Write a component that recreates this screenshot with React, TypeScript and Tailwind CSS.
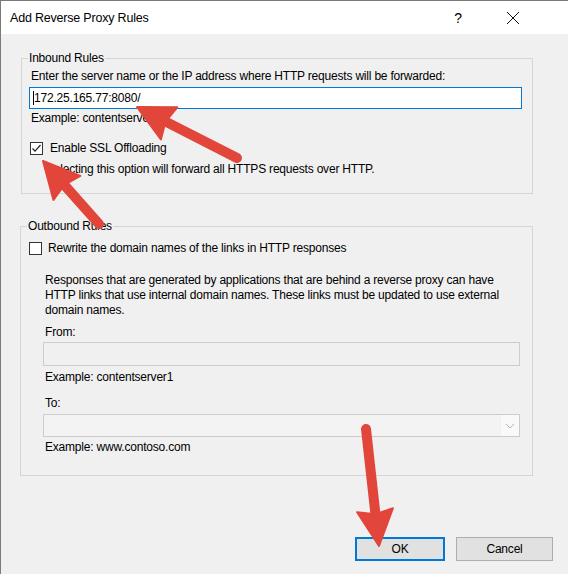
import React from "react";

const font = { fontFamily: '"Liberation Sans", Arial, sans-serif' };

type Pt = [number, number];

// red callout arrow laid over the dialog
function Arrow({ tail, tip, headLen = 36, headHalf = 18, shaft = 10 }: { tail: Pt; tip: Pt; headLen?: number; headHalf?: number; shaft?: number }) {
  const dx = tip[0] - tail[0];
  const dy = tip[1] - tail[1];
  const len = Math.sqrt(dx * dx + dy * dy);
  const ux = dx / len;
  const uy = dy / len;
  const bx = tip[0] - ux * headLen;
  const by = tip[1] - uy * headLen;
  const px = -uy;
  const py = ux;
  const head = [
    tip,
    [bx + px * headHalf, by + py * headHalf],
    [bx + ux * 4, by + uy * 4],
    [bx - px * headHalf, by - py * headHalf],
  ]
    .map((p) => p.join(","))
    .join(" ");
  return (
    <g>
      <line x1={tail[0]} y1={tail[1]} x2={bx + ux * 6} y2={by + uy * 6} stroke="#e2453a" strokeWidth={shaft} strokeLinecap="round" />
      <polygon points={head} fill="#e2453a" stroke="#e2453a" strokeWidth={2} strokeLinejoin="round" />
    </g>
  );
}

function CheckBox({ checked }: { checked?: boolean }) {
  return (
    <div className="w-[13px] h-[13px] border border-[#333333] bg-white flex items-center justify-center shrink-0">
      {checked && (
        <svg width="11" height="11" viewBox="0 0 11 11">
          <path d="M1.5 5.5 L4 8.2 L9.5 2" fill="none" stroke="#222" strokeWidth="1.2" />
        </svg>
      )}
    </div>
  );
}

export default function App() {
  return (
    <div className="relative w-[568px] h-[574px] overflow-hidden bg-[#f0f0f0] border-l border-t border-[#7a7a7a] text-[12px] leading-[16px] tracking-[-0.2px] text-black" style={font}>
      {/* title bar */}
      <div className="h-[33px] bg-white flex items-center pl-[9px]">
        <div className="text-[12.5px]">Add Reverse Proxy Rules</div>
        <div className="ml-auto w-[20px] text-center text-[14px] mr-[38px]">?</div>
        <svg width="14" height="14" viewBox="0 0 14 14" className="mr-[48px]">
          <path d="M1 1 L13 13 M13 1 L1 13" stroke="#111" strokeWidth="1" />
        </svg>
      </div>

      {/* inbound */}
      <fieldset className="mt-[16px] ml-[20px] w-[512px] border border-[#d5d5d5] pb-[16px]">
        <legend className="ml-[6px] px-[1px] leading-[16px]">Inbound Rules</legend>
        <div className="pt-[2px] ml-[9px]">Enter the server name or the IP address where HTTP requests will be forwarded:</div>
        <div className="mt-[3px] ml-[7px] w-[493px] h-[22px] border border-[#0078d7] bg-white flex items-center pl-[3px]">
          <span className="w-px h-[14px] bg-black" />
          <span>172.25.165.77:8080/</span>
        </div>
        <div className="mt-[1px] ml-[9px]">Example: contentserver1</div>
        <div className="mt-[14px] ml-[8px] flex items-center gap-[7px]">
          <CheckBox checked />
          <span>Enable SSL Offloading</span>
        </div>
        <div className="mt-[5px] ml-[24px]">Selecting this option will forward all HTTPS requests over HTTP.</div>
      </fieldset>

      {/* outbound */}
      <fieldset className="mt-[24px] ml-[19px] w-[513px] border border-[#d5d5d5] pb-[20px]">
        <legend className="ml-[6px] px-[1px] leading-[16px]">Outbound Rules</legend>
        <div className="pt-[6px] ml-[8px] flex items-center gap-[6px]">
          <CheckBox />
          <span>Rewrite the domain names of the links in HTTP responses</span>
        </div>
        <div className="mt-[17px] ml-[24px] leading-[15px]">
          Responses that are generated by applications that are behind a reverse proxy can have
          <br />
          HTTP links that use internal domain names. These links must be updated to use external
          <br />
          domain names.
        </div>
        <div className="mt-[6px] ml-[24px]">From:</div>
        <div className="mt-[2px] ml-[22px] w-[477px] h-[24px] border border-[#cccccc] bg-[#f0f0f0]" />
        <div className="mt-[3px] ml-[24px]">Example: contentserver1</div>
        <div className="mt-[10px] ml-[24px]">To:</div>
        <div className="mt-[3px] ml-[22px] w-[477px] h-[23px] border border-[#cccccc] bg-[#f3f3f3] flex">
          <div className="flex-1" />
          <div className="w-[18px] bg-[#f9f9f9] flex items-center justify-center">
            <svg width="10" height="6" viewBox="0 0 10 6">
              <path d="M1 1 L5 5 L9 1" fill="none" stroke="#b5b5b5" strokeWidth="1" />
            </svg>
          </div>
        </div>
        <div className="mt-[2px] ml-[24px]">Example: www.contoso.com</div>
      </fieldset>

      {/* buttons */}
      <div className="mt-[61px] flex justify-end pr-[15px] gap-[11px]">
        <button className="w-[90px] h-[24px] border-2 border-[#0078d7] bg-[#e1e1e1]">OK</button>
        <button className="w-[97px] h-[24px] border border-[#adadad] bg-[#e1e1e1]">Cancel</button>
      </div>

      {/* callout arrows */}
      <svg className="absolute left-0 top-0 pointer-events-none" width="568" height="574">
        <Arrow tail={[236, 157]} tip={[136, 106]} />
        <Arrow tail={[98, 223]} tip={[42, 160]} />
        <Arrow tail={[365, 428]} tip={[378, 545]} />
      </svg>
    </div>
  );
}
